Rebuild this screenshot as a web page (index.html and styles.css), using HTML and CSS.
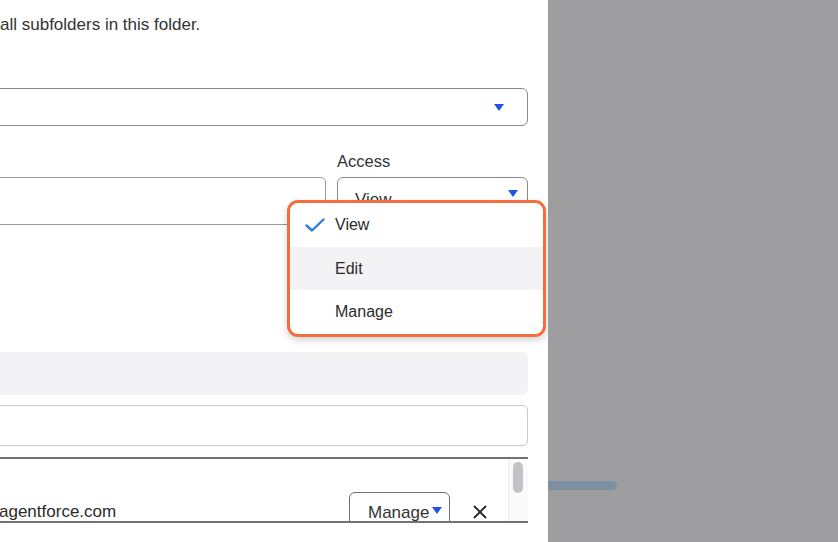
FILE: index.html
```html
<!DOCTYPE html>
<html lang="en">
<head>
    <meta charset="UTF-8">
    <meta name="viewport" content="width=device-width, initial-scale=1.0">
    <title>Share Folder</title>
    <link rel="stylesheet" href="styles.css">
</head>
<body>
    <div class="panel">
        <p class="hint">all subfolders in this folder.</p>

        <div class="select wide">
            <span class="caret"></span>
        </div>

        <div class="share-row">
            <div class="col col-user">
                <div class="input tall"></div>
            </div>
            <div class="col col-access">
                <label class="label">Access</label>
                <div class="select access">
                    <span class="value">View</span>
                    <span class="caret"></span>
                </div>
            </div>
        </div>

        <div class="notice"></div>
        <div class="input search"></div>

        <div class="list">
            <div class="list-row">
                <span class="email">agentforce.com</span>
                <div class="select small">
                    <span class="value">Manage</span>
                    <span class="caret"></span>
                </div>
                <svg class="remove" viewBox="0 0 14 14" width="14" height="14">
                    <path d="M1.5 1.5 L12.5 12.5 M12.5 1.5 L1.5 12.5" stroke="#222" stroke-width="1.8" stroke-linecap="round"/>
                </svg>
            </div>
            <div class="scrollbar"><div class="thumb"></div></div>
        </div>

        <!-- open access menu -->
        <ul class="menu">
            <li class="menu-item">
                <svg class="check" viewBox="0 0 20 14" width="20" height="14">
                    <path d="M1.5 7.5 L7 12.5 L18.5 1.5" fill="none" stroke="#2f7be6" stroke-width="2.4" stroke-linecap="round" stroke-linejoin="round"/>
                </svg>
                View
            </li>
            <li class="menu-item hover">Edit</li>
            <li class="menu-item">Manage</li>
        </ul>
    </div>
    <div class="backdrop-bar"></div>
</body>
</html>
```

FILE: styles.css
```css
body {
    margin: 0;
    background: #9e9d9f;
    font-family: 'Liberation Sans', Arial, sans-serif;
    color: #2b2b2b;
    height: 542px;
    overflow: hidden;
    position: relative;
}
.panel {
    position: relative;
    width: 548px;
    height: 542px;
    background: #fff;
    overflow: hidden;
}
.hint {
    margin: 0;
    padding-top: 15px;
    font-size: 17px;
    line-height: 19px;
    color: #333;
}
.select {
    position: relative;
    box-sizing: border-box;
    border: 1px solid #8a8a8a;
    border-radius: 6px;
    background: #fff;
}
.caret {
    position: absolute;
    width: 0;
    height: 0;
    border-left: 5px solid transparent;
    border-right: 5px solid transparent;
    border-top: 7px solid #1f55e6;
}
.wide {
    margin: 54px 20px 0 -10px;
    height: 38px;
}
.wide .caret {
    right: 23px;
    top: 15px;
}
.share-row {
    display: flex;
    gap: 11px;
    margin: 26px 20px 0 -10px;
}
.col-user {
    flex: 1;
    padding-top: 25px;
}
.col-access {
    width: 191px;
}
.label {
    display: block;
    font-size: 16.5px;
    line-height: 19px;
    color: #333;
    height: 19px;
    margin-bottom: 6px;
}
.input {
    box-sizing: border-box;
    border: 1px solid #9a9a9a;
    border-radius: 5px;
    background: #fff;
}
.tall {
    height: 48px;
}
.access {
    height: 48px;
}
.access .value {
    position: absolute;
    left: 17px;
    top: 12px;
    font-size: 17px;
    color: #333;
}
.access .caret {
    right: 9px;
    top: 12px;
}
.notice {
    margin: 127px 20px 0 -10px;
    height: 43px;
    border-radius: 6px;
    background: #f3f2f5;
}
.search {
    margin: 10px 20px 0 -10px;
    height: 41px;
    border-color: #c8c8c8;
}
.list {
    position: relative;
    margin: 11px 20px 0 -10px;
    height: 62px;
    border-top: 2px solid #727272;
    border-bottom: 2px solid #727272;
    overflow: hidden;
}
.list-row {
    position: relative;
    height: 100%;
}
.email {
    position: absolute;
    left: 9px;
    top: 43px;
    font-size: 17px;
    color: #2b2b2b;
}
.small {
    position: absolute;
    left: 359px;
    top: 33px;
    width: 101px;
    height: 40px;
    border-color: #6f6f6f;
}
.small .value {
    position: absolute;
    left: 18px;
    top: 10px;
    font-size: 17px;
    color: #333;
}
.small .caret {
    right: 7px;
    top: 14px;
}
.remove {
    position: absolute;
    left: 483px;
    top: 46px;
}
.scrollbar {
    position: absolute;
    top: 0;
    right: 0;
    bottom: 0;
    width: 19px;
    background: #fafafa;
    border-left: 1px solid #ececec;
}
.thumb {
    margin: 3px 0 0 4px;
    width: 10px;
    height: 31px;
    border-radius: 5px;
    background: #c3c2c4;
}
.menu {
    position: absolute;
    left: 287px;
    top: 200px;
    width: 253px;
    margin: 0;
    padding: 0;
    list-style: none;
    background: #fff;
    border: 3px solid #f46d3f;
    border-radius: 11px;
    box-shadow: 0 3px 7px rgba(0, 0, 0, 0.18);
    overflow: hidden;
}
.menu-item {
    position: relative;
    height: 43.5px;
    line-height: 43.5px;
    padding-left: 45px;
    font-size: 16px;
    color: #2b2b2b;
}
.menu-item.hover {
    background: #f3f2f5;
}
.check {
    position: absolute;
    left: 15px;
    top: 15px;
}
.backdrop-bar {
    position: absolute;
    left: 548px;
    top: 481px;
    width: 69px;
    height: 9px;
    border-radius: 0 5px 5px 0;
    background: #7d90a1;
}
```
